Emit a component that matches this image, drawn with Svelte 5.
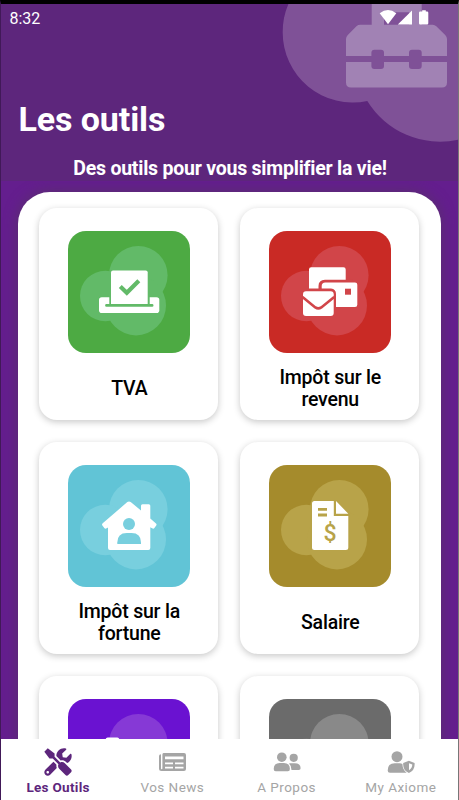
<script lang="ts">
  interface Tool {
    id: string;
    label: string;
    color: string;
    bubble: string;
  }

  interface Tab {
    id: string;
    label: string;
  }

  const tools: Tool[] = [
    { id: "tva", label: "TVA", color: "#4daa43", bubble: "#62ba68" },
    { id: "revenu", label: "Impôt sur le revenu", color: "#c92a25", bubble: "#d14549" },
    { id: "fortune", label: "Impôt sur la fortune", color: "#61c4d6", bubble: "#78cfde" },
    { id: "salaire", label: "Salaire", color: "#a58b2c", bubble: "#b8a349" },
    { id: "violet", label: "", color: "#6a12d1", bubble: "#8639d6" },
    { id: "gris", label: "", color: "#6b6b6b", bubble: "#898989" },
  ];

  const tabs: Tab[] = [
    { id: "tools", label: "Les Outils" },
    { id: "news", label: "Vos News" },
    { id: "about", label: "A Propos" },
    { id: "account", label: "My Axiome" },
  ];

  let active = $state("tools");
</script>

<div class="screen">
  <header>
    <svg class="header-art" width="176" height="142" viewBox="282 4 176 142">
      <path
        fill="#7f5197"
        d="M282.7 31.7a70 70 0 0 0 84.6 69.3A85.3 85.3 0 0 0 458 139.8V4H288.4a70 70 0 0 0-5.7 27.7z"
      />
      <path
        fill="#a182b4"
        fill-rule="evenodd"
        d="M371.7 4h50v20.700h11q2 0 3.600 1.500l8.900 8.900q1.800 1.800 1.800 4V56h-25.300v-3.300q0-3-3-3H412q-3 0-3 3V56h-25v-3.300q0-3-3-3h-6.600q-3 0-3 3V56H346V39q0-2.200 1.800-4l8.900-8.900q1.500-1.400 3.600-1.400h11.400zM384 12.300v12.400h25.200V12.300z"
      />
      <path
        fill="#a182b4"
        d="M346 62h25.400v4q0 3 3 3h6.600q3 0 3-3v-4h25v4q0 3 3 3h6.700q3 0 3-3v-4H447v20.500q0 5-5 5H351q-5 0-5-5z"
      />
    </svg>
    <div class="status">
      <span>8:32</span>
      <svg width="50" height="15" viewBox="378 10 50 15" fill="#fff">
        <path d="M387 24.300 378.700 13.200q8.300-6.200 16.600 0z" />
        <path d="M396.800 24.500 411 10.500v14z" />
        <path d="M419.200 11.500h2v-1.300h3.600v1.300h1.300q1.200 0 1.200 1.200v10.600q0 1.200-1.200 1.200h-6.900q-1.200 0-1.200-1.200V12.700q0-1.200 1.200-1.200z" />
      </svg>
    </div>
    <h1>Les outils</h1>
    <p>Des outils pour vous simplifier la vie!</p>
  </header>

  <main>
    <div class="panel">
      {#each tools as tool (tool.id)}
        <button class="card">
          <svg class="tile" width="122" height="122" viewBox="0 0 122 122">
            <rect width="122" height="122" rx="18" fill={tool.color} />
            <g fill={tool.bubble}>
              <circle cx="70.300" cy="44.300" r="29.300" />
              <circle cx="37.300" cy="65" r="25.300" />
              <circle cx="68" cy="74.400" r="30" />
            </g>
            {#if tool.id === "tva"}
              <rect x="31" y="66.300" width="60.300" height="15.700" rx="2.800" fill="#fff" />
              <path fill={tool.bubble} d="M41.300 66v7H38.500a1.400 1.400 0 0 0 0 2.800h45.600a1.400 1.400 0 0 0 0-2.800H81.700V66z" />
              <path fill="#fff" d="M43 73V41.500q0-2 2-2h32.700q2 0 2 2V73z" />
              <path class="line" stroke={tool.bubble} stroke-width="4.200" d="m52.300 55.500 6.500 6.200 12-12" />
            {:else if tool.id === "revenu"}
              <g fill="#fff">
                <path d="M40 38.500q0-2.200 2.200-2.200h32.300q2.200 0 2.200 2.200v10.300H56q-6.500.2-6.500 6.200v2.500H40z" />
                <path d="M52.700 57.500V55q0-3.600 3.600-3.600H86q2.300 0 2.300 2.300v20q0 2.300-2.300 2.300H67V63q0-5-5-5.500z" />
                <rect x="34" y="60.300" width="30.700" height="24.700" rx="3" />
              </g>
              <path fill="#d14549" d="M76 57.700h6v6h-6z" />
              <path class="line" stroke="#d14549" stroke-width="2.600" d="m33.500 66 12.800 10.400q3 2 6 0L65.200 66" />
            {:else if tool.id === "fortune"}
              <path
                fill="#fff"
                d="M59.300 37.100q1.700-1.300 3.400 0L73 45.500v-4.700q0-1.500 1.500-1.500h6.300q1.500 0 1.500 1.500v12.700l5.700 5q1 1 .2 2l-1.800 2.600q-1 1.200-2.300.2l-1.800-1V83q0 2-2 2H42q-2 0-2-2V62.500l-1.300.8q-1.400 1-2.400-.2l-1.900-2.500q-.9-1.200.3-2.300z"
              />
              <circle cx="61" cy="59" r="6" fill={tool.bubble} />
              <path fill={tool.bubble} d="M49.300 79v-1.500q0-9.500 9.500-9.500h4.700q9.500 0 9.500 9.500V79z" />
            {:else if tool.id === "salaire"}
              <path
                fill="#fff"
                d="M45.500 36h19.300v15h14.500v31.500q0 2.500-2.500 2.500H45.500q-2.500 0-2.500-2.500v-44Q43 36 45.500 36zM67 36l12.300 12.700H67z"
              />
              <path class="line" stroke={tool.bubble} stroke-width="2.800" d="M49 44.300h9M49 50h9" />
              <text x="61" y="76.300" fill={tool.bubble}>$</text>
            {:else if tool.id === "violet"}
              <rect x="37.700" y="38.500" width="13.600" height="30" rx="2" fill="#fff" />
            {/if}
          </svg>
          <span class="label"><span>{tool.label}</span></span>
        </button>
      {/each}
    </div>
  </main>

  <nav>
    {#each tabs as tab (tab.id)}
      <button class="tab" class:active={active === tab.id} onclick={() => (active = tab.id)}>
        {#if tab.id === "tools"}
          <svg width="28" height="28" viewBox="-6 -6 524 524">
            <path
              d="M501.100 395.700L384 278.600c-23.100-23.100-57.600-27.600-85.400-13.900L192 158.100V96L64 0 0 64l96 128h62.100l106.600 106.600c-13.600 27.800-9.200 62.300 13.900 85.400l117.100 117.100c14.600 14.600 38.200 14.600 52.700 0l52.700-52.700c14.500-14.600 14.500-38.200 0-52.700zM331.700 225c28.300 0 54.900 11 74.900 31l19.400 19.400c15.800-6.900 30.800-16.500 43.800-29.500 37.100-37.100 49.700-89.300 37.900-136.700-2.200-9-13.500-12.100-20.100-5.500l-74.400 74.400-67.900-11.300L334 98.900l74.400-74.400c6.600-6.600 3.400-17.900-5.700-20.200-47.400-11.700-99.600.9-136.600 37.900-28.500 28.500-41.900 66.100-41.200 103.600l82.100 82.100c8.100-1.900 16.500-2.900 24.700-2.900zm-103.900 82l-56.700-56.700L18.700 402.800c-25 25-25 65.500 0 90.500s65.500 25 90.500 0l123.600-123.600c-7.600-19.900-9.900-41.600-5-62.700zM64 472c-13.200 0-24-10.800-24-24 0-13.300 10.700-24 24-24s24 10.700 24 24c0 13.200-10.700 24-24 24z"
            />
          </svg>
        {:else if tab.id === "news"}
          <svg width="28" height="28" viewBox="0 0 28 28">
            <path
              fill-rule="evenodd"
              d="M5.500 5H26q2 0 2 2v14q0 2-2 2H3.500Q1 23 1 20.500V8q0-1.800 2-1.800v14.300q0 .7.700.7t.7-.7V6.500Q4.400 5 5.500 5zM7 8.400v2.800h18.500V8.400zM7 14.500v1.700h8v-1.700zM17 14.500v1.700h8.500v-1.700zM7 18.700v1.700h8v-1.700zM17 18.700v1.700h8.500v-1.700z"
            />
          </svg>
        {:else if tab.id === "about"}
          <svg width="28" height="28" viewBox="0 0 28 28">
            <circle cx="8.800" cy="9.200" r="4.800" />
            <circle cx="20.700" cy="9.800" r="4.100" />
            <path d="M.7 21q0-6 6-6h4.200q6 0 6 6 0 2.200-2 2.200H2.700q-2 0-2-2.200zM17 15.200h4.600q6 0 6 5 0 1.800-1.800 1.800h-7.300q0-4.200-2.500-6.400z" />
          </svg>
        {:else}
          <svg width="28" height="28" viewBox="0 0 28 28">
            <circle cx="10" cy="8.700" r="5.500" />
            <path d="M.7 22.500q0-7.200 7-7.200h5.200q1.200 0 2.500.6.200 5.700 4.200 8.900H3q-2.300 0-2.300-2.300z" />
            <path fill-rule="evenodd" d="m21.900 12.800 5.700 2.300q.6 7.500-5.700 9.800-6.200-2.300-5.700-9.800zM22 15.300v7q3.300-2 3.300-5.700z" />
          </svg>
        {/if}
        <span>{tab.label}</span>
      </button>
    {/each}
  </nav>
</div>

<style>
  :global(body) {
    margin: 0;
    background: #000;
  }

  .screen {
    display: flex;
    flex-direction: column;
    box-sizing: border-box;
    width: 459px;
    height: 800px;
    border-top: 4px solid #000;
    border-left: 1px solid #411958;
    border-right: 1px solid #777;
    overflow: hidden;
    background: #641e8e;
    font-family: Roboto, "Liberation Sans", sans-serif;
  }

  header {
    position: relative;
    flex: none;
    height: 177px;
    background: #5d267c;
    color: #fff;
  }

  .header-art {
    position: absolute;
    top: 0;
    right: 0;
  }

  .status {
    position: relative;
    display: flex;
    justify-content: space-between;
    padding: 6px 29px 0 8.5px;
    font-size: 16px;
    line-height: 18px;
  }

  h1 {
    margin: 70px 0 0 17.5px;
    font-size: 34px;
    line-height: 42px;
    font-weight: 700;
    letter-spacing: -0.1px;
  }

  p {
    margin: 18px 0 0;
    padding-left: 1px;
    font-size: 19.5px;
    line-height: 22px;
    font-weight: 700;
    letter-spacing: -0.23px;
    text-align: center;
  }

  main {
    flex: 1;
    min-height: 0;
    padding: 10.5px 17px 0 16.5px;
    overflow: hidden;
  }

  .panel {
    display: grid;
    grid-template-columns: 179px 179px;
    justify-content: center;
    gap: 22px;
    padding: 16.5px 0;
    border-radius: 32px;
    background: #fff;
    box-shadow: 0 0 14px #58316a;
  }

  button {
    font: inherit;
    border: 0;
    cursor: pointer;
  }

  .card {
    display: flex;
    flex-direction: column;
    align-items: center;
    height: 212px;
    padding: 23px 20px 0;
    border-radius: 18px;
    background: #fff;
    box-shadow: 0 2px 7px rgba(0, 0, 0, 0.22);
  }

  .tile {
    flex: none;
  }

  .tile text {
    font-size: 23px;
    font-weight: 500;
    text-anchor: middle;
  }

  .line {
    fill: none;
  }

  .label {
    display: flex;
    flex: 1;
    align-items: center;
    padding: 5px 0 0 1px;
    color: #000;
    font-size: 19.5px;
    line-height: 22.5px;
    font-weight: 500;
    letter-spacing: -0.2px;
  }

  nav {
    position: relative;
    display: flex;
    flex: none;
    height: 61px;
    background: #fff;
  }

  .tab {
    display: flex;
    flex: 1;
    flex-direction: column;
    align-items: center;
    padding: 9px 0 0;
    background: none;
    color: #a5a5a5;
    font-size: 13.5px;
    line-height: 22px;
    letter-spacing: 0.45px;
  }

  .tab svg {
    flex: none;
    fill: currentColor;
  }

  .tab.active {
    color: #5d267c;
    font-weight: 700;
    letter-spacing: 0.3px;
  }
</style>
